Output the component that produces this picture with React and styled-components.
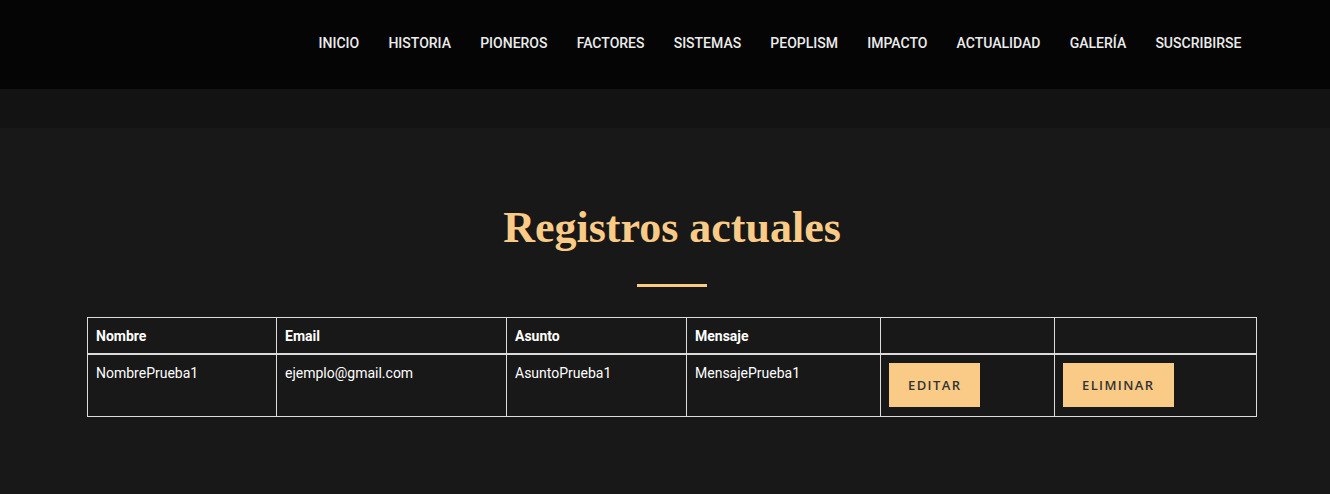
import styled, { createGlobalStyle } from "styled-components";

const GlobalStyle = createGlobalStyle`
  body {
    margin: 0;
    background: #181818;
    font-family: Roboto, "Liberation Sans", sans-serif;
  }
`;

const Header = styled.header`
  height: 89px;
  background: #050505;
  display: flex;
  align-items: center;
  justify-content: flex-end;
  padding-right: 74px;
`;

const Nav = styled.nav`
  display: flex;
  margin-top: -3px;
`;

const NavLink = styled.a`
  padding: 0 14.6px;
  color: #ececec;
  font-size: 14px;
  font-weight: 500;
  text-transform: uppercase;
  text-decoration: none;
`;

const Strip = styled.div`
  height: 39px;
  background: #131313;
`;

const Section = styled.section`
  padding: 72px 73px 77px 87px;
  display: flex;
  flex-direction: column;
  align-items: center;
`;

const Title = styled.h2`
  margin: 0;
  font-family: "Liberation Serif", serif;
  font-weight: 700;
  font-size: 44px;
  line-height: 56px;
  color: #f9cb87;
`;

const Divider = styled.div`
  width: 70px;
  height: 3px;
  background: #f9cb87;
  margin: 28px 0 30px;
`;

const Table = styled.table`
  width: 100%;
  border-collapse: collapse;
  color: #fff;
  font-size: 14px;
  line-height: 20px;

  th,
  td {
    border: 1px solid #dcdcdc;
    padding: 8px;
    text-align: left;
    vertical-align: top;
  }

  th {
    font-weight: 700;
    border-bottom-width: 2px;
    padding-bottom: 7px;
  }

  td {
    padding-bottom: 9px;
  }
`;

const ActionButton = styled.button`
  background: #f9cb87;
  color: #333;
  border: none;
  height: 44px;
  padding: 0 19px;
  font-family: "Open Sans", sans-serif;
  font-size: 13px;
  font-weight: 600;
  letter-spacing: 1.4px;
  text-transform: uppercase;
  cursor: pointer;
`;

const links = [
  "Inicio",
  "Historia",
  "Pioneros",
  "Factores",
  "Sistemas",
  "Peoplism",
  "Impacto",
  "Actualidad",
  "Galería",
  "Suscribirse",
];

const rows = [
  {
    nombre: "NombrePrueba1",
    email: "ejemplo@gmail.com",
    asunto: "AsuntoPrueba1",
    mensaje: "MensajePrueba1",
  },
];

export default function App() {
  return (
    <>
      <GlobalStyle />
      <Header>
        <Nav>
          {links.map((l) => (
            <NavLink key={l} href="#">
              {l}
            </NavLink>
          ))}
        </Nav>
      </Header>
      <Strip />
      <Section>
        <Title>Registros actuales</Title>
        <Divider />
        <Table>
          <colgroup>
            <col style={{ width: 189 }} />
            <col style={{ width: 230 }} />
            <col style={{ width: 180 }} />
            <col style={{ width: 194 }} />
            <col style={{ width: 174 }} />
            <col />
          </colgroup>
          <thead>
            <tr>
              <th>Nombre</th>
              <th>Email</th>
              <th>Asunto</th>
              <th>Mensaje</th>
              <th></th>
              <th></th>
            </tr>
          </thead>
          <tbody>
            {rows.map((r) => (
              <tr key={r.email}>
                <td>{r.nombre}</td>
                <td>{r.email}</td>
                <td>{r.asunto}</td>
                <td>{r.mensaje}</td>
                <td>
                  <ActionButton>Editar</ActionButton>
                </td>
                <td>
                  <ActionButton>Eliminar</ActionButton>
                </td>
              </tr>
            ))}
          </tbody>
        </Table>
      </Section>
    </>
  );
}
